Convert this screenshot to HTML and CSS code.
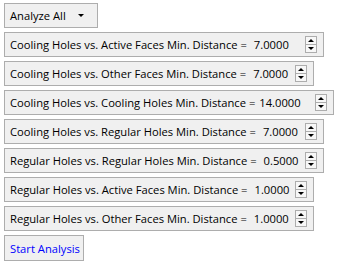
FILE: index.html
```html
<!DOCTYPE html>
<html>
<head>
    <title>Analysis Settings</title>
    <link rel="stylesheet" href="styles.css">
</head>
<body>
    <div class="panel">
        <div class="box menu">Analyze All <span class="caret"></span></div>

        <div class="box row w1">
            <span class="label">Cooling Holes vs. Active Faces Min. Distance =</span>
            <span class="value">7.0000</span>
            <span class="spin"><span class="up"></span><span class="down"></span></span>
        </div>
        <div class="box row w2">
            <span class="label">Cooling Holes vs. Other Faces Min. Distance =</span>
            <span class="value">7.0000</span>
            <span class="spin"><span class="up"></span><span class="down"></span></span>
        </div>
        <div class="box row w3">
            <span class="label">Cooling Holes vs. Cooling Holes Min. Distance =</span>
            <span class="value wide">14.0000</span>
            <span class="spin"><span class="up"></span><span class="down"></span></span>
        </div>
        <div class="box row w1">
            <span class="label">Cooling Holes vs. Regular Holes Min. Distance =</span>
            <span class="value">7.0000</span>
            <span class="spin"><span class="up"></span><span class="down"></span></span>
        </div>
        <div class="box row w1">
            <span class="label">Regular Holes vs. Regular Holes Min. Distance =</span>
            <span class="value">0.5000</span>
            <span class="spin"><span class="up"></span><span class="down"></span></span>
        </div>
        <div class="box row w2">
            <span class="label">Regular Holes vs. Active Faces Min. Distance =</span>
            <span class="value">1.0000</span>
            <span class="spin"><span class="up"></span><span class="down"></span></span>
        </div>
        <div class="box row w2">
            <span class="label">Regular Holes vs. Other Faces Min. Distance =</span>
            <span class="value">1.0000</span>
            <span class="spin"><span class="up"></span><span class="down"></span></span>
        </div>

        <div class="box link">Start Analysis</div>
    </div>
</body>
</html>
```

FILE: styles.css
```css
html { overflow: hidden; }
body
{
    font-family: "Open Sans", "Noto Sans", sans-serif;
    font-size: 11.2px;
    color: #000;
    background-color: #fff;
    margin: 0;
    padding: 3px 4px;
}
.panel
{
    display: flex;
    flex-direction: column;
    align-items: flex-start;
    gap: 4px;
}
.box
{
    box-sizing: border-box;
    height: 25px;
    border: 1px solid #adadad;
    background-color: #f0f0f0;
    display: flex;
    align-items: center;
    padding: 0 6px 0 5px;
    white-space: nowrap;
}
.menu
{
    width: 94px;
}
.caret
{
    width: 0;
    height: 0;
    margin-left: 12px;
    border-left: 3px solid transparent;
    border-right: 3px solid transparent;
    border-top: 3px solid #000;
}
.w1 { width: 320px; }
.w2 { width: 310px; }
.w3 { width: 330px; }
.value
{
    margin-left: 7px;
}
.value.wide
{
    margin-left: 4px;
}
.spin
{
    box-sizing: border-box;
    margin-left: auto;
    width: 12px;
    height: 17px;
    border: 1px solid #adadad;
    background-color: #f7f7f7;
    display: flex;
    flex-direction: column;
}
.spin .up, .spin .down
{
    flex: 1;
    display: flex;
    align-items: center;
    justify-content: center;
}
.spin .up
{
    border-bottom: 1px solid #adadad;
}
.spin .up::after
{
    content: "";
    border-left: 3px solid transparent;
    border-right: 3px solid transparent;
    border-bottom: 3px solid #000;
}
.spin .down::after
{
    content: "";
    border-left: 3px solid transparent;
    border-right: 3px solid transparent;
    border-top: 3px solid #000;
}
.link
{
    color: #0000ff;
    width: 80px;
    height: 26px;
}
```
